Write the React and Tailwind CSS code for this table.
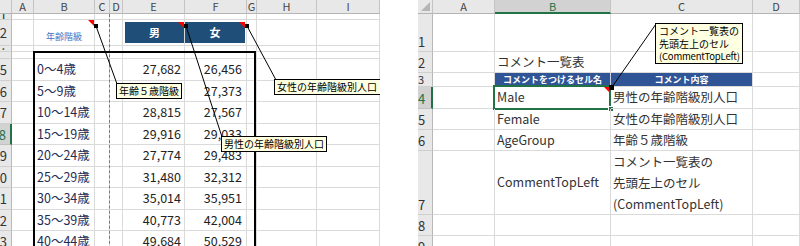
import React from "react";

const FONT = "font-['Noto_Sans_CJK_JP',sans-serif]";

const LW = ["w-[12px]", "w-[22px]", "w-[61px]", "w-[15px]", "w-[13px]", "w-[62px]", "w-[62px]", "w-[10px]", "w-[60px]", "w-[63px]"];
const LETTERS_L = ["", "A", "B", "C", "D", "E", "F", "G", "H", "I"];

const RedTri = () => (
  <div className="absolute right-0 top-0 w-0 h-0 border-t-[6px] border-t-[#ff0000] border-l-[6px] border-l-transparent" />
);

const leftData = [
  ["5", "0～4歳", "27,682", "26,456", "h-[22px]"],
  ["6", "5～9歳", "", "27,373", "h-[21px]"],
  ["7", "10～14歳", "28,815", "27,567", "h-[22px]"],
  ["8", "15～19歳", "29,916", "29,033", "h-[21px]"],
  ["9", "20～24歳", "27,774", "29,483", "h-[22px]"],
  ["10", "25～29歳", "31,480", "32,312", "h-[21px]"],
  ["11", "30～34歳", "35,014", "35,951", "h-[22px]"],
  ["12", "35～39歳", "40,773", "42,004", "h-[21px]"],
  ["13", "40～44歳", "49,684", "50,529", "h-[22px]"],
];

function RowHead({ label, sel, h }) {
  return (
    <div
      className={`${LW[0]} ${h} shrink-0 overflow-hidden flex items-center justify-end pr-[4px] text-[13px] leading-none border-b ${
        sel ? "bg-[#d2d2d2] text-[#217346] border-r-2 border-r-[#217346] border-b-[#c0c0c0]" : "bg-[#e8e8e8] text-[#333] border-r border-r-[#b8b8b8] border-b-[#cfcfcf]"
      }`}
    >
      {label}
    </div>
  );
}

function Cell({ i, h, children, className = "" }) {
  return (
    <div className={`${LW[i]} ${h} shrink-0 relative border-r border-b border-[#dadada] ${className}`}>{children}</div>
  );
}

function LeftSheet() {
  const blankRow = (label, h, sel) => (
    <div className="flex">
      <RowHead label={label} h={h} sel={sel} />
      {LW.slice(1).map((_, k) => (
        <Cell key={k} i={k + 1} h={h} />
      ))}
    </div>
  );
  return (
    <div className={`relative w-[380px] h-[246px] overflow-hidden shrink-0 bg-white ${FONT}`}>
      {/* column header */}
      <div className="flex">
        {LETTERS_L.map((l, i) => (
          <div
            key={i}
            className={`${LW[i]} h-[14px] shrink-0 bg-[#e8e8e8] border-r border-b border-r-[#c4c4c4] border-b-[#b4b4b4] flex items-center justify-center text-[11px] leading-[13px] text-[#444]`}
          >
            {l}
          </div>
        ))}
      </div>
      {blankRow("1", "h-[6px]")}
      {/* row 2 */}
      <div className="flex">
        <RowHead label="2" h="h-[26px]" />
        <Cell i={1} h="h-[26px]" />
        <Cell i={2} h="h-[26px]" className="flex items-end justify-center pb-[4px]">
          <span className="text-[9px] leading-none text-[#4472c4]">年齢階級</span>
          <RedTri />
        </Cell>
        <Cell i={3} h="h-[26px]" />
        <Cell i={4} h="h-[26px]" />
        <Cell i={5} h="h-[26px]" className="pl-[2px] pt-[2px] pb-[2px]">
          <div className="relative h-full bg-[#1f4e79] flex items-center justify-center text-white text-[11px] font-bold">
            男
            <RedTri />
          </div>
        </Cell>
        <Cell i={6} h="h-[26px]" className="pr-[1px] pt-[2px] pb-[2px]">
          <div className="relative h-full bg-[#1f4e79] flex items-center justify-center text-white text-[11px] font-bold">
            女
            <RedTri />
          </div>
        </Cell>
        <Cell i={7} h="h-[26px]" />
        <Cell i={8} h="h-[26px]" />
        <Cell i={9} h="h-[26px]" />
      </div>
      {blankRow("·", "h-[6px]")}
      {blankRow("", "h-[7px]")}
      {leftData.map(([n, a, m, f, h]) => (
        <div className="flex" key={n}>
          <RowHead label={n} h={h} sel={n === "8"} />
          <Cell i={1} h={h} />
          <Cell i={2} h={h} className="flex items-center pl-[3px] text-[12.5px] text-[#1f2d55] whitespace-nowrap">
            {a}
          </Cell>
          <Cell i={3} h={h} />
          <Cell i={4} h={h} />
          <Cell i={5} h={h} className="flex items-center justify-end pr-[3px] text-[12.5px] text-[#222]">
            {m}
          </Cell>
          <Cell i={6} h={h} className="flex items-center justify-end pr-[4px] text-[12.5px] text-[#222]">
            {f}
          </Cell>
          <Cell i={7} h={h} />
          <Cell i={8} h={h} />
          <Cell i={9} h={h} />
        </div>
      ))}

      {/* page break dashed line */}
      <div className="absolute left-[109px] top-[14px] h-[240px] border-l border-dashed border-[#7a7a7a]" />
      {/* thick frame */}
      <div className="absolute left-[33px] top-[51px] w-[223px] h-[220px] border-2 border-black pointer-events-none" />

      {/* comment arrows */}
      <svg className="absolute left-0 top-0" width="380" height="246">
        <line x1="96" y1="26" x2="117" y2="84" stroke="#000" strokeWidth="1" />
        <line x1="186" y1="26" x2="222" y2="137" stroke="#000" strokeWidth="1" />
        <line x1="247" y1="26" x2="276" y2="80" stroke="#000" strokeWidth="1" />
        <rect x="94" y="24" width="4" height="4" fill="#000" />
        <rect x="184" y="24" width="4" height="4" fill="#000" />
        <rect x="245" y="24" width="4" height="4" fill="#000" />
      </svg>

      {/* comments */}
      <div className="absolute left-[116px] top-[83px] h-[16px] px-[2px] bg-[#ffffe1] border border-black text-[10px] leading-[14px] text-black whitespace-nowrap">
        年齢５歳階級
      </div>
      <div className="absolute left-[274px] top-[79px] h-[16px] pl-[2px] pr-[6px] bg-[#ffffe1] border border-black text-[10px] leading-[14px] text-black whitespace-nowrap">
        女性の年齢階級別人口
      </div>
      <div className="absolute left-[221px] top-[136px] h-[16px] px-[2px] bg-[#ffffe1] border border-black text-[10px] leading-[14px] text-black whitespace-nowrap">
        男性の年齢階級別人口
      </div>
    </div>
  );
}

const RW = ["w-[15px]", "w-[62px]", "w-[116px]", "w-[142px]", "w-[47px]"];

function RCell({ i, h, children, className = "" }) {
  return (
    <div className={`${RW[i]} ${h} shrink-0 relative border-r border-b border-[#dadada] ${className}`}>{children}</div>
  );
}

function RHead({ label, h, sel, small }) {
  return (
    <div
      className={`${RW[0]} ${h} shrink-0 overflow-hidden flex ${small ? "items-center text-[11px]" : "items-end pb-[3px] text-[13px]"} leading-none border-b ${
        sel ? "bg-[#d2d2d2] text-[#217346] border-r-2 border-r-[#217346] border-b-[#c0c0c0]" : "bg-[#e8e8e8] text-[#333] border-r border-r-[#b8b8b8] border-b-[#cfcfcf]"
      }`}
    >
      {label}
    </div>
  );
}

function RightSheet() {
  const txt = "flex items-center pl-[2px] text-[12.5px] text-[#333] whitespace-nowrap";
  const rows = [
    { n: "1", h: "h-[38px]" },
    { n: "2", h: "h-[21px]", b: "コメント一覧表" },
    { n: "3", h: "h-[14px]", header: true },
    { n: "4", h: "h-[22px]", b: "Male", c: "男性の年齢階級別人口", sel: true },
    { n: "5", h: "h-[21px]", b: "Female", c: "女性の年齢階級別人口" },
    { n: "6", h: "h-[21px]", b: "AgeGroup", c: "年齢５歳階級" },
    { n: "7", h: "h-[64px]", b: "CommentTopLeft", multi: true },
    { n: "8", h: "h-[21px]" },
    { n: "9", h: "h-[21px]" },
  ];
  return (
    <div className={`relative w-[382px] h-[246px] overflow-hidden shrink-0 bg-white ${FONT}`}>
      <div className="flex">
        <div className={`${RW[0]} h-[14px] shrink-0 bg-[#e8e8e8] border-r border-b border-r-[#c4c4c4] border-b-[#b4b4b4] relative`}>
          <div className="absolute right-[2px] bottom-[2px] w-0 h-0 border-b-[9px] border-b-[#b5b5b5] border-l-[9px] border-l-transparent" />
        </div>
        {["A", "B", "C", "D"].map((l, k) => (
          <div
            key={l}
            className={`${RW[k + 1]} h-[14px] shrink-0 border-r border-r-[#c4c4c4] flex items-center justify-center text-[11px] leading-[13px] ${
              l === "B" ? "bg-[#d2d2d2] text-[#217346] border-b-2 border-b-[#217346]" : "bg-[#e8e8e8] text-[#444] border-b border-b-[#b4b4b4]"
            }`}
          >
            {l}
          </div>
        ))}
      </div>
      {rows.map((r) => (
        <div className="flex" key={r.n}>
          <RHead label={r.n} h={r.h} sel={r.sel} small={r.header} />
          <RCell i={1} h={r.h} />
          {r.header ? (
            <>
              <RCell i={2} h={r.h} className="bg-[#2f5597] border-r-[#c9d3e8] border-b-[#dadada] flex items-center pl-[8px] text-[9px] font-bold text-white whitespace-nowrap leading-none">
                コメントをつけるセル名
              </RCell>
              <RCell i={3} h={r.h} className="bg-[#2f5597] flex items-center justify-center text-[9px] font-bold text-white leading-none">
                コメント内容
              </RCell>
            </>
          ) : (
            <>
              <RCell i={2} h={r.h} className={txt}>
                {r.b}
                {r.sel && (
                  <>
                    <div className="absolute left-[-2px] top-[-2px] w-[118px] h-[25px] border-2 border-[#217346]" />
                    <div className="absolute right-[-4px] bottom-[-4px] w-[6px] h-[6px] bg-[#217346] border border-white" />
                    <RedTri />
                  </>
                )}
              </RCell>
              <RCell i={3} h={r.h} className={r.multi ? "flex flex-col justify-center pl-[2px] text-[12.5px] text-[#333] leading-[21px] whitespace-nowrap" : txt}>
                {r.multi ? (
                  <>
                    <span>コメント一覧表の</span>
                    <span>先頭左上のセル</span>
                    <span>(CommentTopLeft)</span>
                  </>
                ) : (
                  r.c
                )}
              </RCell>
            </>
          )}
          <RCell i={4} h={r.h} />
        </div>
      ))}

      <svg className="absolute left-0 top-0" width="382" height="246">
        <line x1="238" y1="24" x2="194" y2="87" stroke="#000" strokeWidth="1" />
        <rect x="191" y="85" width="5" height="5" fill="#000" />
      </svg>
      <div className="absolute left-[237px] top-[23px] w-[88px] h-[41px] pl-[3px] pt-[1px] bg-[#ffffe1] border border-black text-[10px] leading-[12.5px] text-black whitespace-nowrap">
        <div>コメント一覧表の</div>
        <div>先頭左上のセル</div>
        <div className="text-[9.5px] tracking-[-0.2px]">(CommentTopLeft)</div>
      </div>
    </div>
  );
}

export default function App() {
  return (
    <div className="w-[800px] h-[246px] bg-white flex overflow-hidden">
      <LeftSheet />
      <div className="w-[38px] shrink-0 bg-white" />
      <RightSheet />
    </div>
  );
}
